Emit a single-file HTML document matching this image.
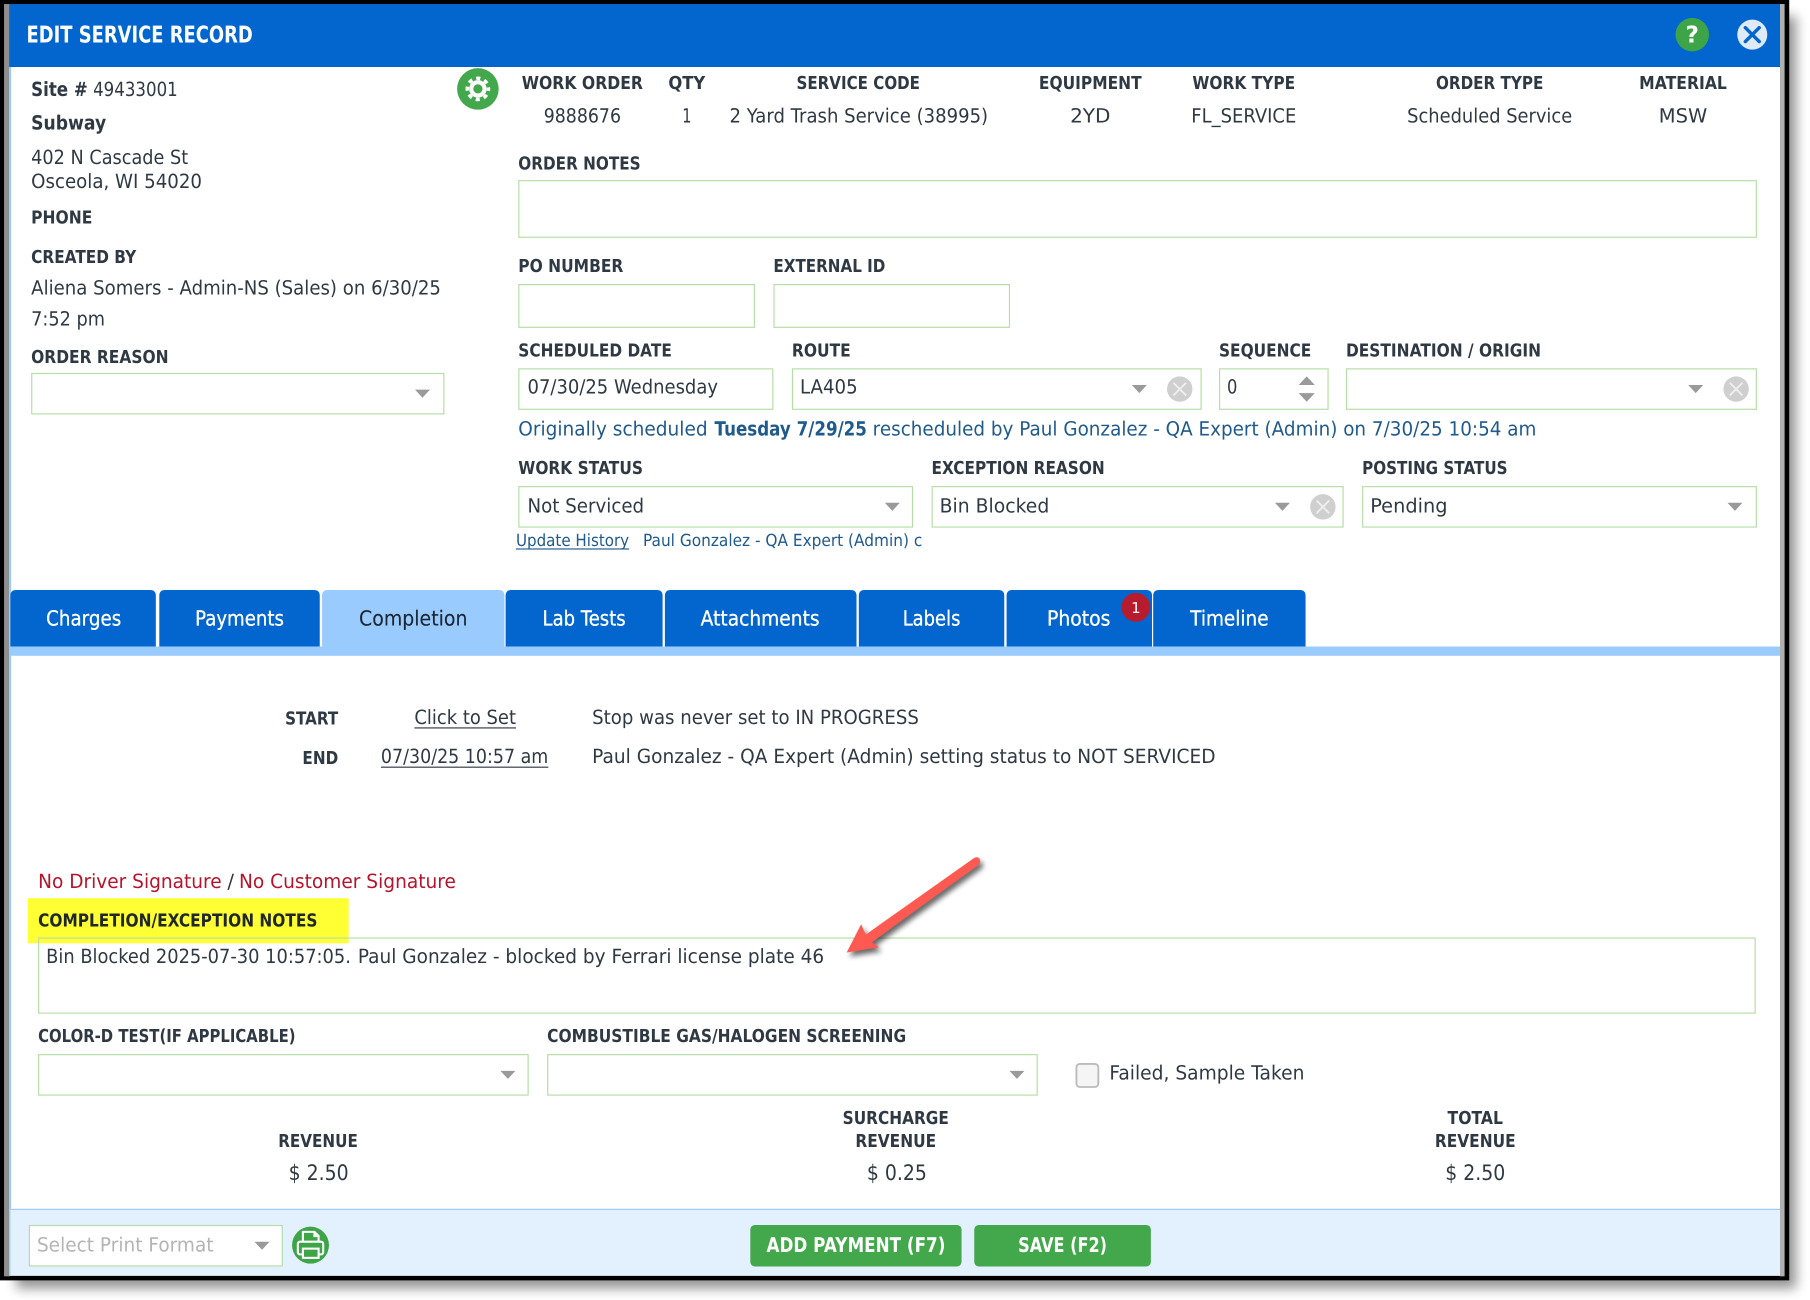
<!DOCTYPE html>
<html><head><meta charset="utf-8"><title>Edit Service Record</title>
<style>
html,body{margin:0;padding:0;background:#fff}
svg{display:block;width:1810px;height:1300px}
text{font-family:"DejaVu Sans","Liberation Sans",sans-serif;font-size:17px;fill:#2f3943;text-rendering:geometricPrecision}
.b{font-weight:700;font-size:15.5px;fill:#2f3943;transform:translateY(-.4px)}
.w{fill:#fff;font-size:18px;stroke:#fff;stroke-width:.25}
.l{fill:#1f5a8c}
.r{fill:#b5142c}
</style></head><body>
<svg viewBox="0 0 1568 1126" preserveAspectRatio="none" xmlns="http://www.w3.org/2000/svg">
<defs>
<filter id="sh" x="-5%" y="-5%" width="110%" height="110%"><feGaussianBlur stdDeviation="5"/></filter>
<filter id="sa" x="-30%" y="-30%" width="160%" height="160%"><feGaussianBlur stdDeviation="2.2"/></filter>
<path id="ar" d="M-6.5-3.5H6.5L0 3.5Z" fill="#9a9a9a"/>
<g id="cl"><circle r="11" fill="#cfcfcf"/><path d="M-5.5-5.5 5.5 5.5M5.5-5.5-5.5 5.5" stroke="#efefef" stroke-width="1.6"/></g>
</defs>

<!-- frame and shadow -->
<rect x="14" y="14" width="1542" height="1102" fill="#000" opacity=".42" filter="url(#sh)"/>
<rect x="0" y="0" width="1550" height="1109" fill="#000"/>
<rect x="3.5" y="3.5" width="5" height="1102" fill="#8e8e8e"/>
<rect x="1542" y="3.5" width="4" height="1102" fill="#b0b0b0"/>
<rect x="8" y="58" width="1534" height="1047" fill="#fff"/>
<rect x="8" y="58" width="1.6" height="1047" fill="#99cbff"/>

<!-- header -->
<rect x="8" y="3.5" width="1534" height="54.5" fill="#0366ce"/>
<text x="23" y="37" class="b" style="font-size:20px;fill:#fff" textLength="196" lengthAdjust="spacingAndGlyphs">EDIT SERVICE RECORD</text>
<circle cx="1466" cy="30" r="14.5" fill="#3da548"/>
<text x="1466" y="37" text-anchor="middle" class="b" style="font-size:20px;fill:#fff">?</text>
<circle cx="1518" cy="30" r="13" fill="#dfeaf8"/>
<path d="M1512 24 1524 36M1524 24 1512 36" stroke="#0366ce" stroke-width="3" stroke-linecap="round"/>

<!-- gear -->
<circle cx="414" cy="77" r="18" fill="#43a84c"/>
<circle cx="414" cy="77" r="5.8" fill="none" stroke="#fff" stroke-width="3.6"/>
<circle cx="414" cy="77" r="9.2" fill="none" stroke="#fff" stroke-width="3" stroke-dasharray="3.6 3.63" stroke-dashoffset="1.8"/>

<!-- left column -->
<text x="27" y="83" textLength="127" lengthAdjust="spacingAndGlyphs"><tspan style="font-weight:700">Site #</tspan> 49433001</text>
<text x="27" y="112" style="font-weight:700" textLength="65" lengthAdjust="spacingAndGlyphs">Subway</text>
<text x="27" y="142" textLength="136" lengthAdjust="spacingAndGlyphs">402 N Cascade St</text>
<text x="27" y="163" textLength="148" lengthAdjust="spacingAndGlyphs">Osceola, WI 54020</text>
<text x="27" y="194" class="b" textLength="53" lengthAdjust="spacingAndGlyphs">PHONE</text>
<text x="27" y="228" class="b" textLength="91" lengthAdjust="spacingAndGlyphs">CREATED BY</text>
<text x="27" y="255" textLength="355" lengthAdjust="spacingAndGlyphs">Aliena Somers - Admin-NS (Sales) on 6/30/25</text>
<text x="27" y="282" textLength="64" lengthAdjust="spacingAndGlyphs">7:52 pm</text>
<text x="27" y="315" class="b" textLength="119" lengthAdjust="spacingAndGlyphs">ORDER REASON</text>
<rect x="27.5" y="323.5" width="357" height="35" fill="#fff" stroke="#b5dda5"/>
<use href="#ar" x="366" y="341"/>

<!-- top columns -->
<g>
<text x="452" y="77.6" class="b" textLength="105" lengthAdjust="spacingAndGlyphs">WORK ORDER</text>
<text x="579" y="77.6" class="b" textLength="32" lengthAdjust="spacingAndGlyphs">QTY</text>
<text x="690" y="77.6" class="b" textLength="107" lengthAdjust="spacingAndGlyphs">SERVICE CODE</text>
<text x="900" y="77.6" class="b" textLength="89" lengthAdjust="spacingAndGlyphs">EQUIPMENT</text>
<text x="1033" y="77.6" class="b" textLength="89" lengthAdjust="spacingAndGlyphs">WORK TYPE</text>
<text x="1244" y="77.6" class="b" textLength="93" lengthAdjust="spacingAndGlyphs">ORDER TYPE</text>
<text x="1420" y="77.6" class="b" textLength="76" lengthAdjust="spacingAndGlyphs">MATERIAL</text>
<text x="471" y="106" textLength="67" lengthAdjust="spacingAndGlyphs">9888676</text>
<text x="591" y="106" textLength="8" lengthAdjust="spacingAndGlyphs">1</text>
<text x="632" y="106" textLength="224" lengthAdjust="spacingAndGlyphs">2 Yard Trash Service (38995)</text>
<text x="927" y="106" textLength="35" lengthAdjust="spacingAndGlyphs">2YD</text>
<text x="1032" y="106" textLength="91" lengthAdjust="spacingAndGlyphs">FL_SERVICE</text>
<text x="1219" y="106" textLength="143" lengthAdjust="spacingAndGlyphs">Scheduled Service</text>
<text x="1437" y="106" textLength="42" lengthAdjust="spacingAndGlyphs">MSW</text>
</g>

<text x="449" y="147" class="b" textLength="106" lengthAdjust="spacingAndGlyphs">ORDER NOTES</text>
<rect x="449.5" y="156.5" width="1072" height="49" fill="#fff" stroke="#b5dda5"/>
<text x="449" y="236" class="b" textLength="91" lengthAdjust="spacingAndGlyphs">PO NUMBER</text>
<text x="670" y="236" class="b" textLength="97" lengthAdjust="spacingAndGlyphs">EXTERNAL ID</text>
<rect x="449.5" y="246.5" width="204" height="37" fill="#fff" stroke="#b5dda5"/>
<rect x="670.5" y="246.5" width="204" height="37" fill="#fff" stroke="#b5dda5"/>

<text x="449" y="309" class="b" textLength="133" lengthAdjust="spacingAndGlyphs">SCHEDULED DATE</text>
<text x="686" y="309" class="b" textLength="51" lengthAdjust="spacingAndGlyphs">ROUTE</text>
<text x="1056" y="309" class="b" textLength="80" lengthAdjust="spacingAndGlyphs">SEQUENCE</text>
<text x="1166" y="309" class="b" textLength="169" lengthAdjust="spacingAndGlyphs">DESTINATION / ORIGIN</text>
<rect x="449.5" y="319.5" width="220" height="35" fill="#fff" stroke="#b5dda5"/>
<rect x="686.5" y="319.5" width="354" height="35" fill="#fff" stroke="#b5dda5"/>
<rect x="1056.5" y="319.5" width="94" height="35" fill="#fff" stroke="#b5dda5"/>
<rect x="1166.5" y="319.5" width="355" height="35" fill="#fff" stroke="#b5dda5"/>
<text x="457" y="341" textLength="165" lengthAdjust="spacingAndGlyphs">07/30/25 Wednesday</text>
<text x="693" y="341" textLength="50" lengthAdjust="spacingAndGlyphs">LA405</text>
<text x="1063" y="341" textLength="9" lengthAdjust="spacingAndGlyphs">0</text>
<use href="#ar" x="987" y="337"/><use href="#cl" x="1022" y="337"/>
<path d="M1125 333.5 1132 326 1139 333.5ZM1125 340.5H1139L1132 348Z" fill="#9a9a9a"/>
<use href="#ar" x="1469" y="337"/><use href="#cl" x="1504" y="337"/>

<text x="449" y="377" class="l" textLength="164" lengthAdjust="spacingAndGlyphs">Originally scheduled</text>
<text x="619" y="377" class="l" style="font-weight:700" textLength="132" lengthAdjust="spacingAndGlyphs">Tuesday 7/29/25</text>
<text x="756" y="377" class="l" textLength="575" lengthAdjust="spacingAndGlyphs">rescheduled by Paul Gonzalez - QA Expert (Admin) on 7/30/25 10:54 am</text>

<text x="449" y="411" class="b" textLength="108" lengthAdjust="spacingAndGlyphs">WORK STATUS</text>
<text x="807" y="411" class="b" textLength="150" lengthAdjust="spacingAndGlyphs">EXCEPTION REASON</text>
<text x="1180" y="411" class="b" textLength="126" lengthAdjust="spacingAndGlyphs">POSTING STATUS</text>
<rect x="449.5" y="421.5" width="341" height="35" fill="#fff" stroke="#b5dda5"/>
<rect x="807.5" y="421.5" width="356" height="35" fill="#fff" stroke="#b5dda5"/>
<rect x="1180.5" y="421.5" width="341" height="35" fill="#fff" stroke="#b5dda5"/>
<text x="457" y="444" textLength="101" lengthAdjust="spacingAndGlyphs">Not Serviced</text>
<text x="814" y="444" textLength="95" lengthAdjust="spacingAndGlyphs">Bin Blocked</text>
<text x="1187" y="444" textLength="67" lengthAdjust="spacingAndGlyphs">Pending</text>
<use href="#ar" x="773" y="439"/><use href="#ar" x="1111" y="439"/><use href="#cl" x="1146" y="439"/><use href="#ar" x="1503" y="439"/>
<text x="447" y="473" class="l" style="font-size:14.5px" textLength="98" lengthAdjust="spacingAndGlyphs">Update History</text>
<rect x="447" y="475" width="98" height="1" fill="#1f5a8c"/>
<text x="557" y="473" class="l" style="font-size:14.5px" textLength="242" lengthAdjust="spacingAndGlyphs">Paul Gonzalez - QA Expert (Admin) c</text>

<!-- tabs -->
<g fill="#0366ce">
<path d="M9 560V516q0-5 5-5H130q5 0 5 5V560Z"/>
<path d="M138 560V516q0-5 5-5H272q5 0 5 5V560Z"/>
<path d="M279 560V516q0-5 5-5H432q5 0 5 5V560Z" fill="#99cbff"/>
<path d="M438 560V516q0-5 5-5H569q5 0 5 5V560Z"/>
<path d="M576 560V516q0-5 5-5H737q5 0 5 5V560Z"/>
<path d="M744 560V516q0-5 5-5H865q5 0 5 5V560Z"/>
<path d="M872 560V516q0-5 5-5H993q5 0 5 5V560Z"/>
<path d="M999 560V516q0-5 5-5H1126q5 0 5 5V560Z"/>
</g>
<rect x="9" y="560" width="1533" height="8" fill="#99cbff"/>
<text x="40" y="541.6" class="w" textLength="65" lengthAdjust="spacingAndGlyphs">Charges</text>
<text x="169" y="541.6" class="w" textLength="77" lengthAdjust="spacingAndGlyphs">Payments</text>
<text x="311" y="541.6" class="w" style="fill:#1c2733;stroke:#1c2733;stroke-width:.1" textLength="94" lengthAdjust="spacingAndGlyphs">Completion</text>
<text x="470" y="541.6" class="w" textLength="72" lengthAdjust="spacingAndGlyphs">Lab Tests</text>
<text x="607" y="541.6" class="w" textLength="103" lengthAdjust="spacingAndGlyphs">Attachments</text>
<text x="782" y="541.6" class="w" textLength="50" lengthAdjust="spacingAndGlyphs">Labels</text>
<text x="907" y="541.6" class="w" textLength="55" lengthAdjust="spacingAndGlyphs">Photos</text>
<text x="1031" y="541.6" class="w" textLength="68" lengthAdjust="spacingAndGlyphs">Timeline</text>
<circle cx="984" cy="526" r="12.5" fill="#b71c2e"/>
<text x="984" y="531" text-anchor="middle" style="font-size:13px;fill:#fff;font-weight:400">1</text>

<!-- completion -->
<text x="247" y="628" class="b" textLength="46" lengthAdjust="spacingAndGlyphs">START</text>
<text x="262" y="662" class="b" textLength="31" lengthAdjust="spacingAndGlyphs">END</text>
<text x="359" y="627" textLength="88" lengthAdjust="spacingAndGlyphs">Click to Set</text>
<rect x="359" y="630" width="88" height="1" fill="#2f3943"/>
<text x="330" y="661" textLength="145" lengthAdjust="spacingAndGlyphs">07/30/25 10:57 am</text>
<rect x="330" y="664" width="145" height="1" fill="#2f3943"/>
<text x="513" y="627" textLength="283" lengthAdjust="spacingAndGlyphs">Stop was never set to IN PROGRESS</text>
<text x="513" y="661" textLength="540" lengthAdjust="spacingAndGlyphs">Paul Gonzalez - QA Expert (Admin) setting status to NOT SERVICED</text>

<text x="33" y="769" class="r" textLength="159" lengthAdjust="spacingAndGlyphs">No Driver Signature</text>
<text x="197" y="769">/</text>
<text x="207" y="769" class="r" textLength="188" lengthAdjust="spacingAndGlyphs">No Customer Signature</text>
<rect x="24" y="778" width="278" height="39" fill="#ffff33"/>
<text x="33" y="803" class="b" style="fill:#1f262c" textLength="242" lengthAdjust="spacingAndGlyphs">COMPLETION/EXCEPTION NOTES</text>
<rect x="33.5" y="812.5" width="1487" height="65" fill="none" stroke="#b5dda5"/>
<text x="40" y="834" textLength="264" lengthAdjust="spacingAndGlyphs">Bin Blocked 2025-07-30 10:57:05.</text>
<text x="310" y="834" textLength="404" lengthAdjust="spacingAndGlyphs">Paul Gonzalez - blocked by Ferrari license plate 46</text>

<!-- red arrow -->
<path d="M733.5 825 746 800.5 750 809.5 844 743Q848 741.5 849 745 849.5 747.5 847 749.5L755.5 816 761.5 820.5Z" fill="#000" opacity=".6" transform="translate(2.5 3.5)" filter="url(#sa)"/>
<path d="M733.5 825 746 800.5 750 809.5 844 743Q848 741.5 849 745 849.5 747.5 847 749.5L755.5 816 761.5 820.5Z" fill="#ff5a52"/>

<text x="33" y="903" class="b" textLength="223" lengthAdjust="spacingAndGlyphs">COLOR-D TEST(IF APPLICABLE)</text>
<text x="474" y="903" class="b" textLength="311" lengthAdjust="spacingAndGlyphs">COMBUSTIBLE GAS/HALOGEN SCREENING</text>
<rect x="33.5" y="913.5" width="424" height="35" fill="#fff" stroke="#b5dda5"/>
<rect x="474.5" y="913.5" width="424" height="35" fill="#fff" stroke="#b5dda5"/>
<use href="#ar" x="440" y="931"/><use href="#ar" x="881" y="931"/>
<rect x="932.5" y="921.5" width="19" height="20" rx="3" fill="#f5f5f5" stroke="#bbb" stroke-width="1.6"/>
<text x="961" y="935" textLength="169" lengthAdjust="spacingAndGlyphs">Failed, Sample Taken</text>

<text x="241" y="994" class="b" textLength="69" lengthAdjust="spacingAndGlyphs">REVENUE</text>
<text x="250" y="1022" style="font-size:18.5px" textLength="52" lengthAdjust="spacingAndGlyphs">$ 2.50</text>
<text x="730" y="974" class="b" textLength="92" lengthAdjust="spacingAndGlyphs">SURCHARGE</text>
<text x="741" y="994" class="b" textLength="70" lengthAdjust="spacingAndGlyphs">REVENUE</text>
<text x="751" y="1022" style="font-size:18.5px" textLength="52" lengthAdjust="spacingAndGlyphs">$ 0.25</text>
<text x="1254" y="974" class="b" textLength="48" lengthAdjust="spacingAndGlyphs">TOTAL</text>
<text x="1243" y="994" class="b" textLength="70" lengthAdjust="spacingAndGlyphs">REVENUE</text>
<text x="1252" y="1022" style="font-size:18.5px" textLength="52" lengthAdjust="spacingAndGlyphs">$ 2.50</text>

<!-- footer -->
<rect x="9" y="1047" width="1533" height="58" fill="#e3f0fd"/>
<rect x="9" y="1047" width="1533" height="1" fill="#99cbff"/>
<rect x="25.5" y="1061.5" width="219" height="35" fill="#fff" stroke="#b5dda5"/>
<text x="32" y="1084" style="fill:#b4b4b4" textLength="153" lengthAdjust="spacingAndGlyphs">Select Print Format</text>
<use href="#ar" x="227" y="1079"/>
<circle cx="269" cy="1078.5" r="16" fill="#3da548"/>
<path d="M262.4 1075V1067H272.5L276 1070.5V1075" fill="none" stroke="#fff" stroke-width="1.8"/>
<path d="M271.5 1067H273L276 1070V1071.5H271.5Z" fill="#fff"/>
<rect x="258" y="1075.5" width="22" height="11" rx="2" fill="none" stroke="#fff" stroke-width="1.8"/>
<rect x="262.4" y="1081.5" width="13.6" height="8" fill="#3da548" stroke="#fff" stroke-width="1.8"/>
<rect x="650" y="1061" width="183" height="36" rx="4" fill="#43a84c"/>
<rect x="844" y="1061" width="153" height="36" rx="4" fill="#43a84c"/>
<text x="664" y="1085" class="b" style="fill:#fff;font-size:17.5px" textLength="155" lengthAdjust="spacingAndGlyphs">ADD PAYMENT (F7)</text>
<text x="882" y="1085" class="b" style="fill:#fff;font-size:17.5px" textLength="77" lengthAdjust="spacingAndGlyphs">SAVE (F2)</text>
</svg>
</body></html>
